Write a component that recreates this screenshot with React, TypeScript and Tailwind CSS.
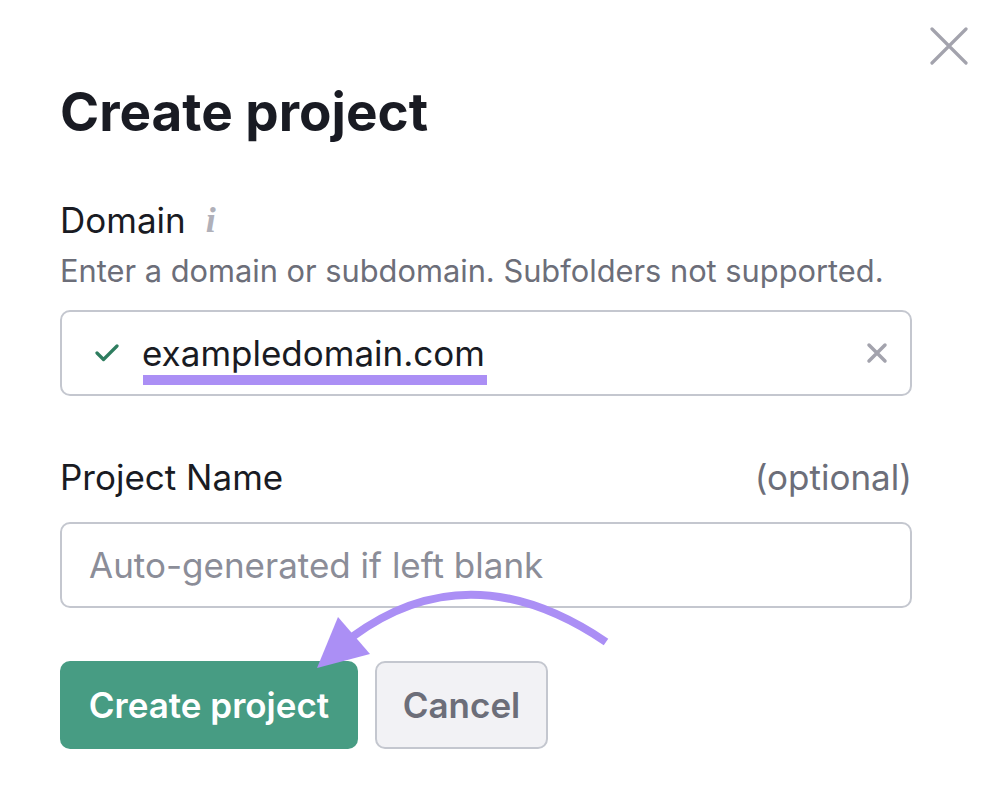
import React from 'react';

const App: React.FC = () => {
  return (
    <div className="relative w-[990px] h-[804px] bg-white overflow-hidden" style={{ fontFamily: 'Inter, "Noto Sans", sans-serif' }}>
      {/* close */}
      <button className="absolute right-[22px] top-[27px] w-[38px] h-[38px] text-[#a3a3ad]">
        <svg viewBox="0 0 38 38" className="w-full h-full" fill="none" stroke="currentColor" strokeWidth="3.2" strokeLinecap="round">
          <path d="M2 2 L36 36 M36 2 L2 36" />
        </svg>
      </button>

      <div className="pl-[60px] pr-[78px] pt-[80px]">
        <h1 className="text-[53px] leading-[64px] font-bold text-[#191b23]">Create project</h1>

        <div className="mt-[54px] flex items-center gap-[20px]">
          <span className="text-[35px] leading-[44px] text-[#191b23]">Domain</span>
          <span className="text-[36px] leading-[44px] italic font-semibold text-[#b0b0b9]" style={{ fontFamily: '"Liberation Serif", serif' }}>i</span>
        </div>
        <p className="mt-[11px] text-[30.8px] leading-[36px] text-[#6c6e79]">Enter a domain or subdomain. Subfolders not supported.</p>

        <div className="mt-[21px] h-[86px] rounded-[10px] border-2 border-[#c4c7cf] flex items-center pl-[33px] pr-[22px]">
          <svg viewBox="0 0 24 18" className="w-[24px] h-[18px] text-[#2e7d5f]" fill="none" stroke="currentColor" strokeWidth="3.2" strokeLinecap="round" strokeLinejoin="round">
            <path d="M2 9 L8.5 15.5 L22 2" />
          </svg>
          <div className="ml-[23px] relative">
            <span className="text-[35px] leading-[44px] text-[#191b23]">exampledomain.com</span>
            <div className="absolute left-[1px] right-[-2px] top-[44px] h-[10px] bg-[#ab8ff5]" />
          </div>
          <svg viewBox="0 0 22 22" className="ml-auto w-[22px] h-[22px] text-[#a3a3ad]" fill="none" stroke="currentColor" strokeWidth="3.5" strokeLinecap="round">
            <path d="M3 3 L19 19 M19 3 L3 19" />
          </svg>
        </div>

        <div className="mt-[59px] flex items-center justify-between">
          <span className="text-[35px] leading-[44px] text-[#191b23]">Project Name</span>
          <span className="text-[35px] leading-[44px] text-[#6c6e79]">(optional)</span>
        </div>

        <div className="mt-[23px] h-[86px] rounded-[10px] border-2 border-[#c4c7cf] flex items-center px-[27px]">
          <span className="text-[35px] leading-[44px] text-[#8b8d98]">Auto-generated if left blank</span>
        </div>

        <div className="mt-[53px] flex gap-[17px]">
          <button className="h-[88px] w-[298px] rounded-[10px] bg-[#479c83] text-white text-[35px] font-semibold">Create project</button>
          <button className="h-[88px] w-[173px] rounded-[10px] bg-[#f2f2f5] border-2 border-[#c4c7cf] text-[#6c6e79] text-[35px] font-semibold">Cancel</button>
        </div>
      </div>

      {/* arrow overlay */}
      <svg className="absolute inset-0 pointer-events-none" width="990" height="804" viewBox="0 0 990 804">
        <path d="M606 642 Q470 550 352 637" fill="none" stroke="#ab8ff5" strokeWidth="8" />
        <path d="M317 668 L338 617 L370 654 Z" fill="#ab8ff5" />
      </svg>
    </div>
  );
};

export default App;
